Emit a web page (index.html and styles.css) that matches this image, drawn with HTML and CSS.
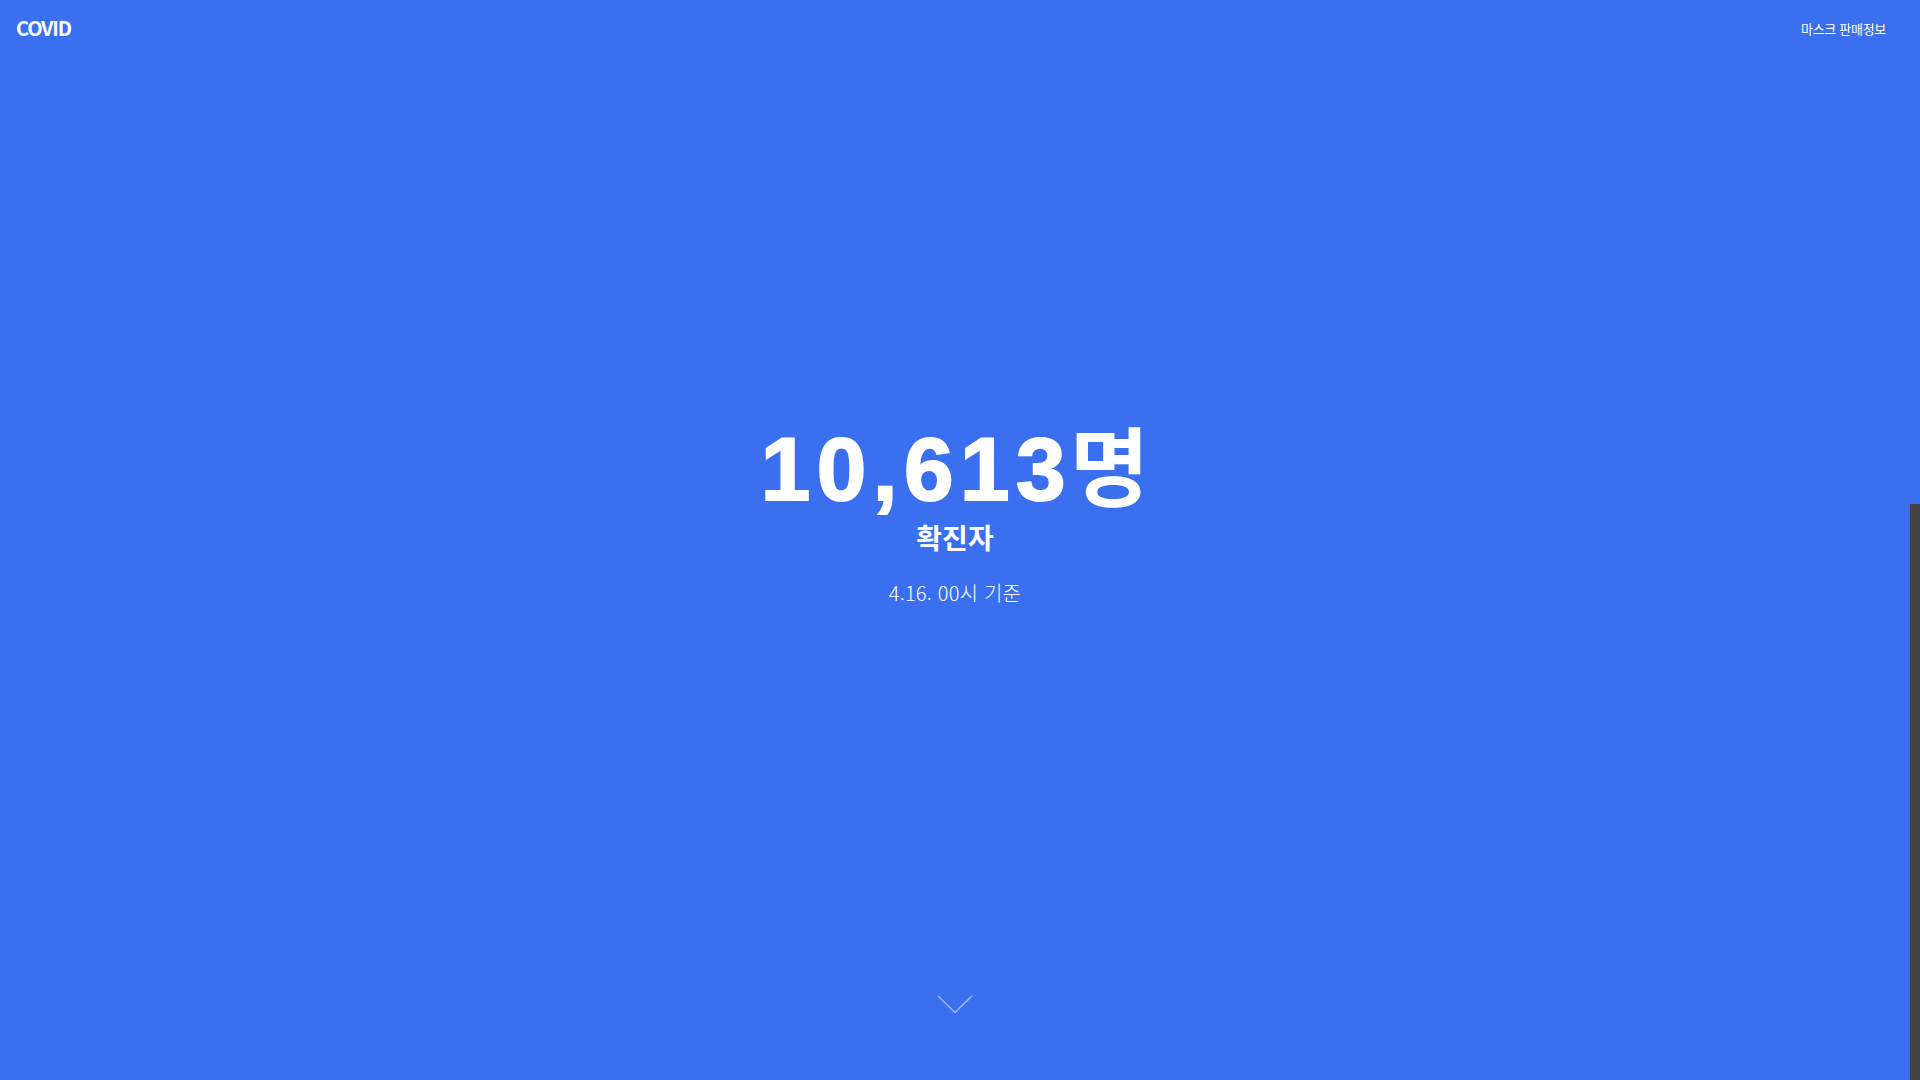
FILE: index.html
```html
<!DOCTYPE html>
<html lang="ko">
<head>
<meta charset="utf-8">
<title>COVID</title>
<link rel="stylesheet" href="styles.css">
</head>
<body>
<div class="page">
  <header class="header">
    <a class="logo" href="#">COVID</a>
    <nav class="nav"><a href="#">마스크 판매정보</a></nav>
  </header>
  <main class="hero">
    <div class="stat">
      <h1 class="count"><span class="num">10,613</span><span class="unit">명</span></h1>
      <p class="label">확진자</p>
      <p class="date">4.16. 00시 기준</p>
    </div>
  </main>
  <div class="down">
    <svg width="36" height="19" viewBox="0 0 36 19"><polyline points="1,1 18,17.5 35,1" fill="none" stroke="rgba(255,255,255,0.55)" stroke-width="1.3"/></svg>
  </div>
</div>
<div class="scroll-bar"></div>
</body>
</html>
```
FILE: styles.css
```css
* { box-sizing: border-box; }
html, body { margin: 0; padding: 0; height: 100%; }
body {
  background: #3a6ff0;
  color: #fff;
  font-family: "Noto Sans CJK KR", "Noto Sans", sans-serif;
  overflow: hidden;
}
a { color: #fff; text-decoration: none; }
.page {
  width: 1910px;
  height: 1080px;
  display: flex;
  flex-direction: column;
}
.header {
  display: flex;
  justify-content: space-between;
  align-items: center;
  height: 54px;
  padding: 0 24px 0 16px;
}
.logo {
  font-family: "Noto Sans CJK KR", sans-serif;
  font-weight: 700;
  font-size: 20px;
  letter-spacing: -1.2px;
}
.nav a {
  font-size: 13px;
  letter-spacing: -0.3px;
}
.hero {
  flex: 1;
  display: flex;
  align-items: center;
  justify-content: center;
  padding-bottom: 24px;
}
.stat { text-align: center; }
.count {
  margin: 0;
  line-height: 1;
  font-weight: 700;
  white-space: nowrap;
}
.num {
  font-family: "Liberation Sans", Arial, sans-serif;
  font-size: 89px;
  letter-spacing: 6.5px;
  -webkit-text-stroke: 2px #fff;
}
.unit {
  font-family: "Noto Sans CJK KR", sans-serif;
  font-size: 86px;
  font-weight: 700;
  margin-left: -2px;
}
.label {
  margin: 7px 0 0;
  font-size: 28px;
  font-weight: 700;
  line-height: 1.2;
}
.date {
  margin: 26px 0 0;
  font-size: 20px;
  font-weight: 300;
  letter-spacing: 0.2px;
  line-height: 1.2;
}
.down {
  display: flex;
  justify-content: center;
  padding-bottom: 66px;
}
.down svg { display: block; }
.scroll-bar {
  position: fixed;
  right: 0;
  top: 504px;
  width: 10px;
  bottom: 0;
  background: #444444;
}
```
